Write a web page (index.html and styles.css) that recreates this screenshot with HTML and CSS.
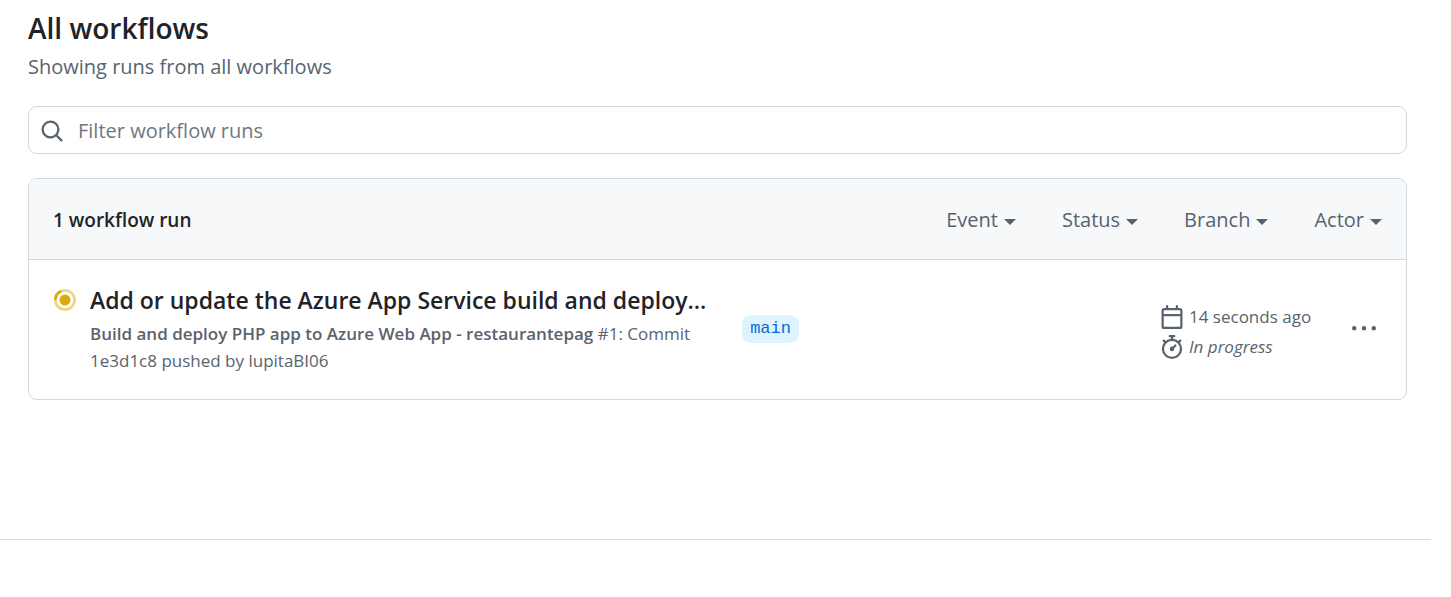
FILE: index.html
```html
<!DOCTYPE html>
<html lang="en">
<head>
<meta charset="utf-8">
<meta name="viewport" content="width=device-width, initial-scale=1">
<title>All workflows</title>
<link rel="stylesheet" href="styles.css">
</head>
<body>
<main class="page">
  <header class="heading">
    <h1 class="title">All workflows</h1>
    <p class="subtitle">Showing runs from all workflows</p>
  </header>

  <form class="search" role="search">
    <label class="search-label" for="filter" aria-label="Filter workflow runs">
      <svg class="icon" viewBox="0 0 16 16" aria-hidden="true"><path d="M10.68 11.74a6 6 0 0 1-7.922-8.982 6 6 0 0 1 8.982 7.922l3.04 3.04a.749.749 0 1 1-1.06 1.06ZM11.5 7a4.499 4.499 0 1 0-8.997 0A4.499 4.499 0 0 0 11.5 7Z"/></svg>
    </label>
    <input class="search-input" id="filter" type="text" placeholder="Filter workflow runs">
  </form>

  <section class="runs">
    <div class="runs-header">
      <h2 class="runs-count">1 workflow run</h2>
      <div class="filters">
        <button class="filter" type="button">Event<span class="caret"></span></button>
        <button class="filter" type="button">Status<span class="caret"></span></button>
        <button class="filter" type="button">Branch<span class="caret"></span></button>
        <button class="filter" type="button">Actor<span class="caret"></span></button>
      </div>
    </div>

    <article class="run">
      <div class="run-main">
        <svg class="run-status" viewBox="0 0 16 16" fill="none" role="img" aria-label="In progress">
          <path stroke="#dbab0a" stroke-width="2" d="M3.05 3.05a7 7 0 1 1 9.9 9.9 7 7 0 0 1-9.9-9.9Z" opacity=".5"/>
          <circle fill="#dbab0a" cx="8" cy="8" r="4"/>
          <path stroke="#dbab0a" stroke-width="2" d="M1 8a7 7 0 0 1 4.3-6.5"/>
        </svg>
        <div class="run-text">
          <a class="run-title" href="#">Add or update the Azure App Service build and deploy…</a>
          <p class="run-detail"><b>Build and deploy PHP app to Azure Web App - restaurantepag</b> #1: Commit 1e3d1c8 pushed by lupitaBI06</p>
        </div>
      </div>
      <div class="run-branch"><a class="branch" href="#">main</a></div>
      <div class="run-meta">
        <div class="meta-line">
          <svg class="icon" viewBox="0 0 16 16" aria-hidden="true"><path d="M4.75 0a.75.75 0 0 1 .75.75V2h5V.75a.75.75 0 0 1 1.5 0V2h1.25c.966 0 1.75.784 1.75 1.75v10.5A1.75 1.75 0 0 1 13.25 16H2.75A1.75 1.75 0 0 1 1 14.25V3.75C1 2.784 1.784 2 2.75 2H4V.75A.75.75 0 0 1 4.75 0ZM2.5 7.5v6.75c0 .138.112.25.25.25h10.5a.25.25 0 0 0 .25-.25V7.5Zm10.75-4H2.75a.25.25 0 0 0-.25.25V6h11V3.75a.25.25 0 0 0-.25-.25Z"/></svg>
          <span>14 seconds ago</span>
        </div>
        <div class="meta-line">
          <svg class="icon" viewBox="0 0 16 16" aria-hidden="true"><path d="M5.75.75A.75.75 0 0 1 6.5 0h3a.75.75 0 0 1 0 1.5h-.75v1l-.001.041a6.724 6.724 0 0 1 3.464 1.435l.007-.006.75-.75a.749.749 0 0 1 1.275.326.749.749 0 0 1-.215.734l-.75.75-.006.007a6.75 6.75 0 1 1-10.548 0L2.72 5.03l-.75-.75a.751.751 0 0 1 .018-1.042.751.751 0 0 1 1.042-.018l.75.75.007.006A6.72 6.72 0 0 1 7.25 2.541V1.5H6.5a.75.75 0 0 1-.75-.75ZM8 14.5a5.25 5.25 0 1 0-.001-10.501A5.25 5.25 0 0 0 8 14.5Zm.389-6.7 1.33-1.33a.75.75 0 1 1 1.061 1.06L9.45 8.861A1.503 1.503 0 0 1 8 10.75a1.499 1.499 0 1 1 .389-2.95Z"/></svg>
          <em>In progress</em>
        </div>
      </div>
      <button class="run-menu" type="button" aria-label="Show options">
        <svg class="icon" viewBox="0 0 16 16" aria-hidden="true"><path d="M8 9a1.5 1.5 0 1 0 0-3 1.5 1.5 0 0 0 0 3ZM1.5 9a1.5 1.5 0 1 0 0-3 1.5 1.5 0 0 0 0 3Zm13 0a1.5 1.5 0 1 0 0-3 1.5 1.5 0 0 0 0 3Z"/></svg>
      </button>
    </article>
  </section>
</main>
<footer class="footer"></footer>
</body>
</html>
```

FILE: styles.css
```css
* {
  box-sizing: border-box;
}

body {
  margin: 0;
  padding-right: 20px;
  background: #fff;
  color: #1f2328;
  font-family: "Segoe UI", "Open Sans", "Noto Sans", sans-serif;
  font-size: 20px;
  line-height: 28px;
}

h1,
h2,
p {
  margin: 0;
}

button {
  padding: 0;
  border: 0;
  background: none;
  color: inherit;
  font: inherit;
  cursor: pointer;
}

.page {
  padding: 8px 24px 0 28px;
}

.title {
  font-size: 28px;
  font-weight: 600;
  line-height: 40px;
}

.subtitle {
  margin-top: 5px;
  color: #59636e;
}

.icon {
  display: block;
  flex: none;
  width: 24px;
  height: 24px;
  fill: #59636e;
}

.search {
  display: flex;
  align-items: center;
  gap: 14px;
  height: 48px;
  margin-top: 25px;
  padding: 2px 11px 0;
  border: 1px solid #d1d9e0;
  border-radius: 9px;
}

.search-input {
  flex: 1;
  min-width: 0;
  padding: 0;
  border: 0;
  outline: 0;
  background: none;
  color: inherit;
  font: inherit;
}

.search-input::placeholder {
  color: #6e7781;
  opacity: 1;
}

.runs {
  margin-top: 24px;
  border: 1px solid #d1d9e0;
  border-radius: 9px;
}

.runs-header {
  display: flex;
  align-items: center;
  justify-content: space-between;
  padding: 27px 24px 25px;
  border-bottom: 1px solid #d1d9e0;
  border-radius: 8px 8px 0 0;
  background: #f6f8fa;
}

.runs-count {
  font-size: 19px;
  font-weight: 600;
}

.filters {
  display: flex;
  gap: 46px;
  color: #59636e;
}

.filter {
  display: flex;
  align-items: center;
  gap: 6px;
}

.caret {
  margin-top: 3px;
  border: 6px solid transparent;
  border-top-color: currentColor;
  border-bottom: 0;
}

.run {
  display: grid;
  grid-template-columns: 28fr 17fr 160px 62px;
  align-items: center;
  padding: 24px 24px 25px 25px;
}

.run-main {
  display: flex;
  gap: 14px;
  min-width: 0;
}

.run-status {
  flex: none;
  width: 22px;
  height: 22px;
  margin-top: 5px;
}

.run-text {
  min-width: 0;
  flex: 1;
  padding-right: 32px;
}

.run-title {
  display: block;
  color: inherit;
  font-size: 23px;
  font-weight: 600;
  line-height: 33px;
  text-decoration: none;
  white-space: nowrap;
}

.run-detail {
  margin-top: 3px;
  color: #59636e;
  font-size: 17px;
  line-height: 27px;
}

.run-detail b {
  font-weight: 600;
}

.run-branch {
  padding-bottom: 3px;
}

.branch {
  display: inline-block;
  padding: 0 8px;
  border-radius: 9px;
  background: #ddf4ff;
  color: #0969da;
  font-family: "Liberation Mono", monospace;
  font-size: 17px;
  text-decoration: none;
}

.run-meta {
  padding-top: 5px;
  color: #59636e;
  font-size: 17px;
  line-height: 30px;
}

.meta-line {
  display: flex;
  align-items: center;
  gap: 5px;
}

.run-menu {
  justify-self: end;
  padding: 4px 6px;
}

.footer {
  margin-top: 139px;
  border-top: 1px solid #d8dce0;
}
```
